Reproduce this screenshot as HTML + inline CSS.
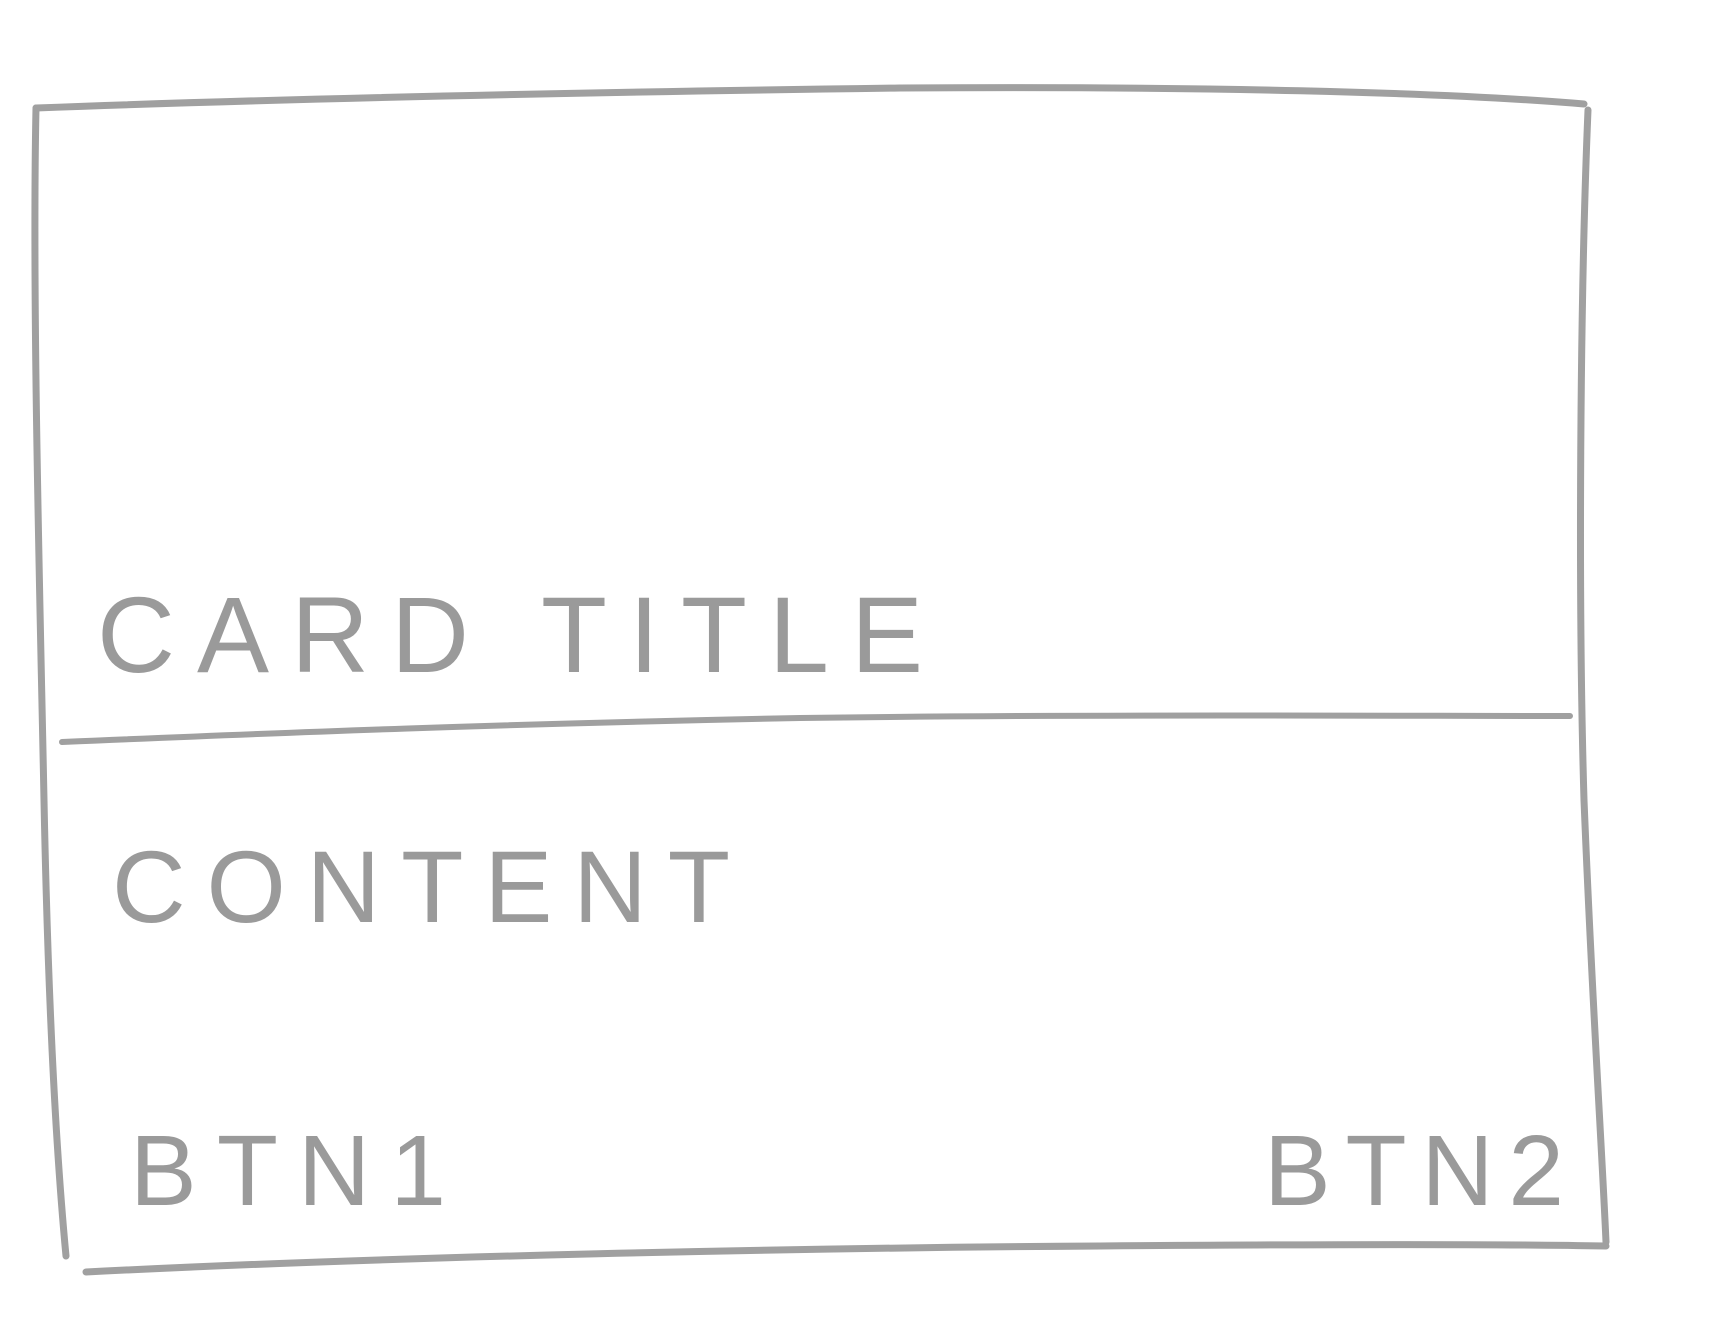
<!DOCTYPE html>
<html><head><meta charset="utf-8"><style>
html,body{margin:0;padding:0;background:#fff;}
svg{display:block}
text{font-family:"Liberation Sans",sans-serif;fill:#9a9a9a;}
</style></head><body>
<svg width="1712" height="1332" viewBox="0 0 1712 1332">
<g fill="none" stroke="#a0a0a0" stroke-width="7" stroke-linecap="round" stroke-linejoin="round">
<path d="M36 108 C300 98 600 92 900 88 C1200 86 1440 92 1584 104"/>
<path d="M36 108 C32 300 40 600 44 800 C48 1000 56 1150 66 1256"/>
<path d="M1588 110 C1580 300 1578 600 1584 800 C1592 1000 1602 1150 1606 1242"/>
<path d="M86 1272 C400 1256 800 1248 1100 1246 C1350 1244 1500 1244 1606 1246"/>
<path d="M62 742 C300 732 500 724 800 718 C1100 714 1400 716 1570 716" stroke-width="6"/>
</g>
<text x="97" y="672" font-size="108" textLength="826" lengthAdjust="spacing">CARD TITLE</text>
<text x="112" y="922" font-size="102" textLength="618" lengthAdjust="spacing">CONTENT</text>
<text x="130" y="1205" font-size="100" textLength="316" lengthAdjust="spacing" fill="#888">BTN1</text>
<text x="1264" y="1205" font-size="100" textLength="300" lengthAdjust="spacing" fill="#888">BTN2</text>
</svg>
</body></html>
